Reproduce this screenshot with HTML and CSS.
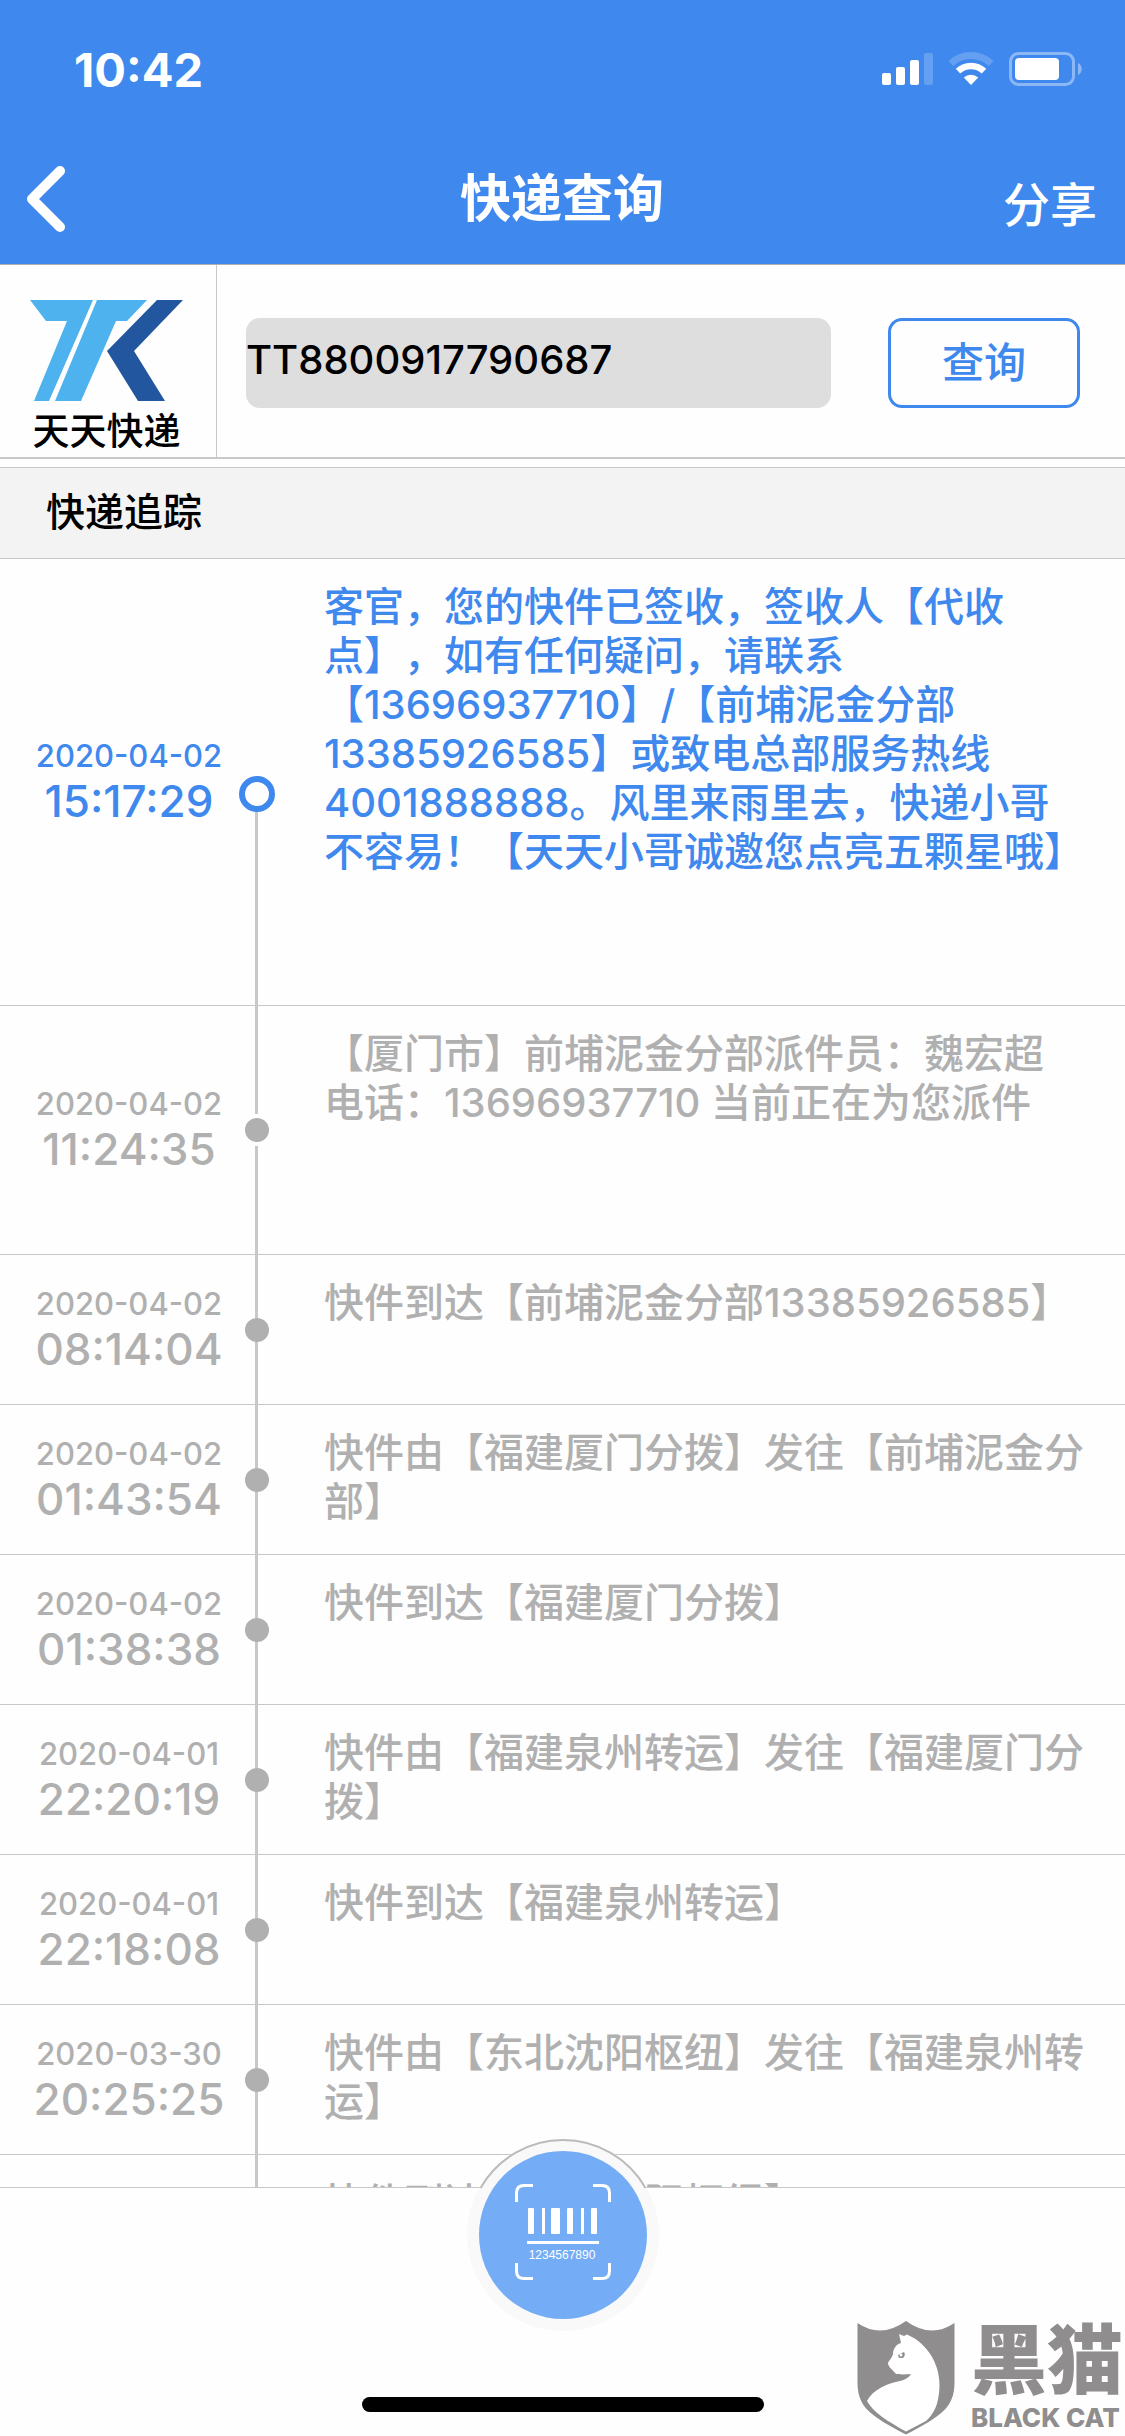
FILE: index.html
```html
<!DOCTYPE html>
<html lang="zh-CN">
<head>
    <meta charset="UTF-8">
    <meta name="viewport" content="width=device-width, initial-scale=1.0">
    <title>快递查询</title>
    <link rel="stylesheet" href="styles.css">
</head>
<body>

<div class="app">
    <header class="header">
        <div class="status-bar">
            <span class="clock">10:42</span>
            <div class="status-icons">
                <svg width="51" height="34" viewBox="0 0 51 34" fill="#fff">
                    <rect x="0" y="21" width="9" height="12" rx="2"/>
                    <rect x="14" y="15" width="9" height="18" rx="2"/>
                    <rect x="28" y="8" width="9" height="25" rx="2"/>
                    <rect x="42" y="1" width="9" height="32" rx="2" opacity="0.2"/>
                </svg>
                <svg width="46" height="34" viewBox="0 0 46 34" fill="none" stroke="#fff">
                    <path d="M2.9 11.5A29.5 29.5 0 0 1 43.1 11.5" stroke-width="7" opacity="0.2"/>
                    <path d="M10 19.1A19 19 0 0 1 36 19.1" stroke-width="6.5"/>
                    <path d="M23 33L15.8 25.6A10.4 10.4 0 0 1 30.2 25.6Z" fill="#fff" stroke="none"/>
                </svg>
                <svg width="73" height="34" viewBox="0 0 73 34">
                    <rect x="1.5" y="1.5" width="63" height="31" rx="8" fill="none" stroke="#fff" stroke-width="3" opacity="0.4"/>
                    <rect x="6" y="6" width="44" height="22" rx="4" fill="#fff"/>
                    <path d="M69 11C74 13 74 21 69 23Z" fill="#fff" opacity="0.4"/>
                </svg>
            </div>
        </div>
        <nav class="nav-bar">
            <button class="back-button" type="button" aria-label="返回">
                <svg width="38" height="66" viewBox="0 0 38 66" fill="none" stroke="#fff" stroke-width="10" stroke-linecap="round" stroke-linejoin="round">
                    <path d="M33 5L5 33L33 61"/>
                </svg>
            </button>
            <h1 class="title">快递查询</h1>
            <button class="share-button" type="button">分享</button>
        </nav>
    </header>

    <form class="query">
        <div class="company">
            <svg width="154" height="103" viewBox="0 0 154 103">
                <path fill="#4db2ee" d="M0 1H63L19 102H4L37 22H16Z"/>
                <path fill="#4db2ee" d="M67 1H117L97 22H86L51 102H25Z"/>
                <path fill="#2257a0" d="M127 1H153L104 52L135 102H108L77 52Z"/>
            </svg>
            <span class="company-name">天天快递</span>
        </div>
        <div class="query-fields">
            <input class="tracking-number" type="text" aria-label="快递单号" value="TT8800917790687">
            <button class="query-button" type="button">查询</button>
        </div>
    </form>

    <h2 class="section-title">快递追踪</h2>

    <ul class="timeline">
        <li class="event latest">
            <div class="when"><span class="date">2020-04-02</span><span class="time">15:17:29</span></div>
            <div class="rail"><span class="ring"></span><span class="line"></span></div>
            <p class="text">客官，您的快件已签收，签收人【代收<br>点】，如有任何疑问，请联系<br>【13696937710】/【前埔泥金分部<br>13385926585】或致电总部服务热线<br>4001888888。风里来雨里去，快递小哥<br>不容易！【天天小哥诚邀您点亮五颗星哦】</p>
        </li>
        <li class="event sending">
            <div class="when"><span class="date">2020-04-02</span><span class="time">11:24:35</span></div>
            <div class="rail"><span class="line"></span><span class="dot"></span><span class="line"></span></div>
            <p class="text">【厦门市】前埔泥金分部派件员：魏宏超<br>电话：13696937710 当前正在为您派件</p>
        </li>
        <li class="event">
            <div class="when"><span class="date">2020-04-02</span><span class="time">08:14:04</span></div>
            <div class="rail"><span class="line"></span><span class="dot"></span><span class="line"></span></div>
            <p class="text">快件到达【前埔泥金分部13385926585】</p>
        </li>
        <li class="event">
            <div class="when"><span class="date">2020-04-02</span><span class="time">01:43:54</span></div>
            <div class="rail"><span class="line"></span><span class="dot"></span><span class="line"></span></div>
            <p class="text">快件由【福建厦门分拨】发往【前埔泥金分<br>部】</p>
        </li>
        <li class="event">
            <div class="when"><span class="date">2020-04-02</span><span class="time">01:38:38</span></div>
            <div class="rail"><span class="line"></span><span class="dot"></span><span class="line"></span></div>
            <p class="text">快件到达【福建厦门分拨】</p>
        </li>
        <li class="event">
            <div class="when"><span class="date">2020-04-01</span><span class="time">22:20:19</span></div>
            <div class="rail"><span class="line"></span><span class="dot"></span><span class="line"></span></div>
            <p class="text">快件由【福建泉州转运】发往【福建厦门分<br>拨】</p>
        </li>
        <li class="event">
            <div class="when"><span class="date">2020-04-01</span><span class="time">22:18:08</span></div>
            <div class="rail"><span class="line"></span><span class="dot"></span><span class="line"></span></div>
            <p class="text">快件到达【福建泉州转运】</p>
        </li>
        <li class="event">
            <div class="when"><span class="date">2020-03-30</span><span class="time">20:25:25</span></div>
            <div class="rail"><span class="line"></span><span class="dot"></span><span class="line"></span></div>
            <p class="text">快件由【东北沈阳枢纽】发往【福建泉州转<br>运】</p>
        </li>
        <li class="event">
            <div class="when"></div>
            <div class="rail"><span class="line"></span></div>
            <p class="text">快件到达【东北沈阳枢纽】</p>
        </li>
    </ul>

    <footer class="footer">
        <button class="scan-button" type="button" aria-label="扫描条形码">
            <svg width="192" height="192" viewBox="0 0 192 192">
                <circle cx="96" cy="96" r="96" fill="#f9f9f9"/>
                <path d="M13.5 49A95 95 0 0 1 178.5 49" fill="none" stroke="#bbb" stroke-width="2"/>
                <circle cx="96" cy="96" r="84" fill="#74adf6"/>
                <g fill="none" stroke="#fff" stroke-width="3">
                    <path d="M49.5 63V54Q49.5 46.5 57 46.5H66"/>
                    <path d="M126 46.5H135Q142.5 46.5 142.5 54V63"/>
                    <path d="M49.5 124V132Q49.5 139.5 57 139.5H66"/>
                    <path d="M126 139.5H135Q142.5 139.5 142.5 132V124"/>
                </g>
                <g fill="#fff">
                    <rect x="61" y="69" width="6" height="26" rx="1"/>
                    <rect x="75" y="69" width="3" height="26"/>
                    <rect x="84" y="69" width="9" height="26" rx="1"/>
                    <rect x="100" y="69" width="6" height="26" rx="1"/>
                    <rect x="114" y="69" width="3" height="26"/>
                    <rect x="124" y="69" width="6" height="26" rx="1"/>
                    <rect x="60" y="102" width="72" height="3"/>
                    <text class="scan-digits" x="95" y="120" text-anchor="middle">1234567890</text>
                </g>
            </svg>
        </button>
        <div class="home-indicator"></div>
    </footer>

    <div class="watermark">
        <svg width="98" height="115" viewBox="0 0 98 115">
            <path fill="#8f8d8e" d="M0.5 3Q24 19 49 1Q74 19 97.5 3V62C97.5 88 84 96 49 114.5C14 96 0.5 88 0.5 62Z"/>
            <path fill="#fff" d="M44 23L42 14L47 16L50 14.5C72 24 83 46 82.5 66C82 84 77 94 69 101L49 111.5C30 101 16 92 10 81C16 69 32 63 43 61C49 59.5 52 57 54 54C49 54.5 42 54.5 39 54C36 50 31 47 31 43C32 40 35 38 36 34C36 28 40 24 44 23Z"/>
            <path fill="#8f8d8e" d="M41 35L47 32Q49 35 46 38L42 38Z"/>
            <circle cx="44" cy="35" r="1.5" fill="#fff"/>
        </svg>
        <div class="brand">
            <span class="brand-cn">黑猫</span>
            <span class="brand-en">BLACK CAT</span>
        </div>
    </div>
</div>

</body>
</html>
```

FILE: styles.css
```css
* {
    box-sizing: border-box;
}
body {
    margin: 0;
    background-color: #fefefe;
    font-family: Inter, "Noto Sans CJK SC", sans-serif;
    font-weight: 500;
    text-spacing-trim: space-all;
}
button {
    padding: 0;
    border: none;
    background: none;
    font-family: inherit;
    font-weight: inherit;
    cursor: pointer;
}
svg {
    display: block;
    flex-shrink: 0;
}
.app {
    position: relative;
    display: flex;
    flex-direction: column;
    height: 100vh;
    overflow: hidden;
}

/* Header */
.header {
    background-color: #3f88ee;
    color: white;
    border-bottom: 1px solid #b0b0b0;
}
.status-bar {
    display: flex;
    justify-content: space-between;
    align-items: center;
    height: 138px;
    padding: 0 43px 0 74px;
}
.clock {
    font-size: 47px;
    font-weight: 700;
}
.status-icons {
    display: flex;
    gap: 15px;
}
.nav-bar {
    display: grid;
    grid-template-columns: 1fr auto 1fr;
    align-items: center;
    height: 126px;
    padding: 0 28px 4px 27px;
}
.back-button {
    justify-self: start;
}
.title {
    margin: 0;
    font-size: 51px;
    font-weight: 600;
    line-height: 60px;
}
.share-button {
    justify-self: end;
    padding-top: 12px;
    color: white;
    font-size: 47px;
    line-height: 60px;
}

/* Query form */
.query {
    display: flex;
    height: 194px;
    border-bottom: 2px solid #c8c8c8;
}
.company {
    display: flex;
    flex-direction: column;
    flex-shrink: 0;
    align-items: center;
    width: 217px;
    padding: 34px 3px 0 0;
    border-right: 1px solid #c8c8c8;
}
.company-name {
    font-size: 37px;
    line-height: 60px;
}
.query-fields {
    display: flex;
    flex: 1;
    gap: 57px;
    align-items: center;
    min-width: 0;
    padding: 4px 45px 0 29px;
}
.tracking-number {
    flex: 1;
    min-width: 0;
    height: 90px;
    padding: 0 0 8px;
    border: none;
    border-radius: 14px;
    background-color: #dedede;
    color: black;
    font-family: inherit;
    font-size: 40px;
    font-weight: 500;
}
.query-button {
    width: 192px;
    height: 90px;
    padding-bottom: 8px;
    border: 3px solid #3f88ee;
    border-radius: 14px;
    color: #3f88ee;
    font-size: 42px;
}

/* Timeline */
.section-title {
    margin: 8px 0 0;
    padding: 0 46px 2px;
    background-color: #f3f3f3;
    border-top: 1px solid #c8c8c8;
    border-bottom: 1px solid #c8c8c8;
    font-size: 39px;
    font-weight: 500;
    line-height: 88px;
}
.timeline {
    flex: 1;
    min-height: 0;
    margin: 0;
    padding: 0;
    overflow: hidden;
    list-style: none;
    color: #b0b0b0;
}
.event {
    display: flex;
    height: 150px;
    border-bottom: 1px solid #c8c8c8;
}
.event.latest {
    height: 447px;
    color: #3f88ee;
}
.event.sending {
    height: 249px;
}
.when {
    display: flex;
    flex-direction: column;
    justify-content: center;
    width: 238px;
    padding: 0 0 6px 20px;
    text-align: center;
}
.date {
    font-size: 31px;
    line-height: 44px;
}
.time {
    font-size: 44px;
    line-height: 46px;
}
.rail {
    display: flex;
    flex-direction: column;
    align-items: center;
    width: 37px;
}
.line {
    flex: 1;
    width: 3px;
    background-color: #c8c8c8;
}
.dot {
    width: 24px;
    height: 24px;
    border-radius: 50%;
    background-color: #b0b0b0;
}
.sending .dot {
    margin: 4px 0;
}
.ring {
    width: 36px;
    height: 36px;
    margin-top: 217px;
    border: 6px solid #3f88ee;
    border-radius: 50%;
}
.text {
    flex: 1;
    margin: 0;
    padding: 23px 0 0 49px;
    font-size: 40px;
    line-height: 49px;
    white-space: nowrap;
}

/* Footer */
.footer {
    position: relative;
    display: flex;
    justify-content: center;
    align-items: flex-end;
    height: 249px;
    padding-bottom: 24px;
    border-top: 1px solid #c8c8c8;
}
.scan-button {
    position: absolute;
    top: -49px;
    left: calc(50% - 96px);
    border-radius: 50%;
}
.scan-digits {
    font-family: "Liberation Sans", Arial, sans-serif;
    font-size: 12px;
}
.home-indicator {
    width: 402px;
    height: 15px;
    border-radius: 8px;
    background-color: black;
}

/* Corner mark */
.watermark {
    position: absolute;
    right: 2px;
    bottom: 0;
    display: flex;
    gap: 16px;
    color: #8f8d8e;
}
.brand {
    display: flex;
    flex-direction: column;
}
.brand-cn {
    font-size: 76px;
    font-weight: 900;
    line-height: 80px;
}
.brand-en {
    font-size: 26px;
    font-weight: 800;
    line-height: 36px;
}
```
